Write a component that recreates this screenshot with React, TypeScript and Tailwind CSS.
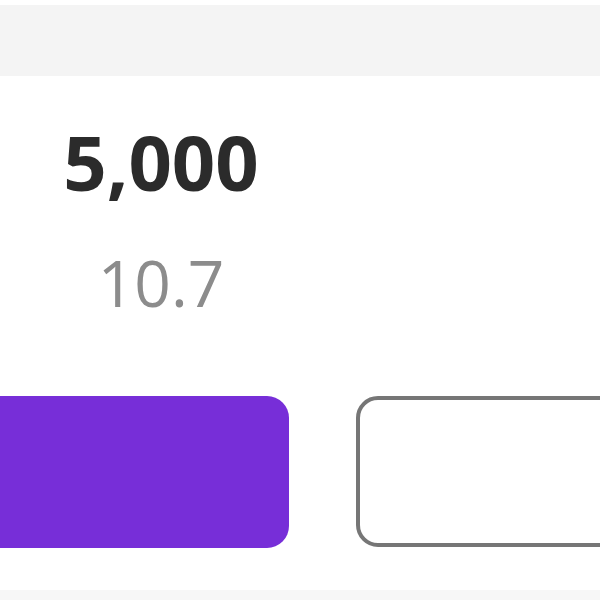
export default function App() {
  return (
    <div
      className="w-[600px] h-[600px] overflow-hidden bg-white flex flex-col"
      style={{ fontFamily: '"Open Sans", sans-serif' }}
    >
      {/* top strip */}
      <div className="h-[5px] bg-white" />
      <div className="h-[71px] bg-[#f4f4f4]" />

      {/* amount */}
      <div className="w-[322px] pt-[48px] flex flex-col items-center">
        <div className="text-[76px] leading-none font-bold text-[#2b2b2b]">5,000</div>
        <div className="mt-[51px] text-[64px] leading-none text-[#8c8c8c]">10.7</div>
      </div>

      {/* buttons */}
      <div className="mt-[81px] flex gap-[67px] ml-[-40px]">
        <button className="w-[329px] h-[152px] shrink-0 rounded-[22px] bg-[#772ed8]" />
        <button className="w-[300px] h-[151px] shrink-0 rounded-[22px] border-[4px] border-[#767676] bg-white" />
      </div>

      <div className="mt-[42px] flex-1 bg-[#f7f7f7]" />
    </div>
  );
}
